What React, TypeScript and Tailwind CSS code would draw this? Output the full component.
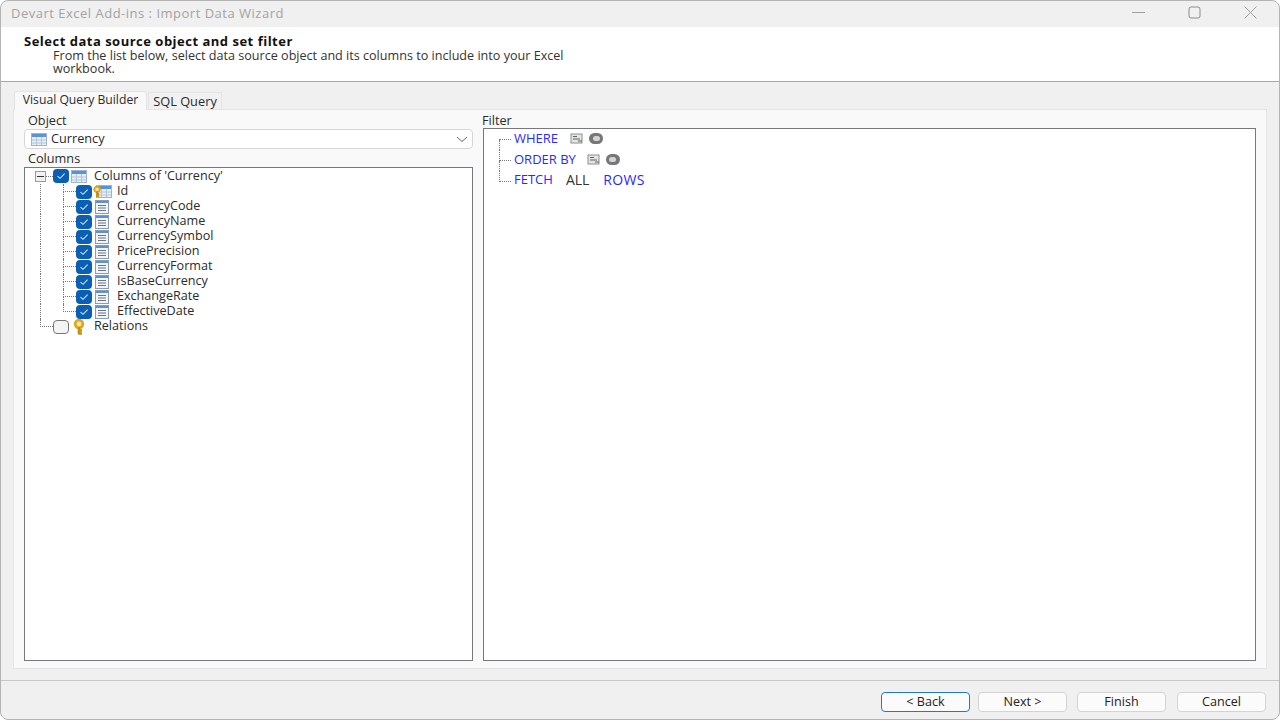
const columns = [
  "Id",
  "CurrencyCode",
  "CurrencyName",
  "CurrencySymbol",
  "PricePrecision",
  "CurrencyFormat",
  "IsBaseCurrency",
  "ExchangeRate",
  "EffectiveDate",
];

function Check({ on }: { on: boolean }) {
  if (!on) {
    return <div className="h-[14px] w-[16px] shrink-0 rounded-[4px] border border-[#777] bg-[#f4f4f4]" />;
  }
  return (
    <div className="flex h-[14px] w-[16px] shrink-0 items-center justify-center rounded-[4px] bg-[#0a5fb4]">
      <svg width="10" height="8" viewBox="0 0 10 8" fill="none" stroke="#cfe3f7" strokeWidth="1.1">
        <path d="M1.5 4.2 4 6.3 8.6 1.6" />
      </svg>
    </div>
  );
}

function TableIcon() {
  return (
    <svg width="16" height="13" viewBox="0 0 16 13" className="shrink-0">
      <rect x="0.5" y="0.5" width="15" height="12" fill="#e8eef6" stroke="#9fb4ce" />
      <rect x="1" y="1" width="14" height="3" fill="#5a93d3" />
      <path d="M1 7h14M1 10h14M5.5 4v8M10.5 4v8" stroke="#b4c6dc" strokeWidth="1" />
    </svg>
  );
}

function ColumnIcon() {
  return (
    <svg width="16" height="14" viewBox="0 0 16 14" className="shrink-0">
      <rect x="1.5" y="0.5" width="13" height="13" fill="#f1f4f8" stroke="#8b9db3" />
      <rect x="2" y="1" width="12" height="2" fill="#5a93d3" />
      <path d="M4 5.5h8M4 8h8M4 10.5h8" stroke="#6d7580" strokeWidth="1" />
    </svg>
  );
}

function KeyIcon({ w = 14, h = 16 }: { w?: number; h?: number }) {
  return (
    <svg width={w} height={h} viewBox="0 0 14 16" className="relative z-10 shrink-0">
      <circle cx="7" cy="5" r="3.8" fill="#fbe9a8" stroke="#e0a820" strokeWidth="2.8" />
      <path d="M7 8v7.5M7 11.5h3M7 14.5h3" stroke="#c98f12" strokeWidth="2.6" fill="none" />
    </svg>
  );
}

// dotted tree guides, each one cell of a row
function Pipe({ width }: { width: string }) {
  return <div className={`h-full shrink-0 border-l border-dotted border-[#777] ${width}`} />;
}

function Tee({ width, last, first }: { width: string; last?: boolean; first?: boolean }) {
  return (
    <div className={`h-full shrink-0 ${width}`}>
      <div className={`h-1/2 border-b border-dotted border-[#777] ${first ? "" : "border-l"}`} />
      {!last && <div className="h-1/2 border-l border-dotted border-[#777]" />}
    </div>
  );
}

function FilterIcon() {
  return (
    <svg width="14" height="11" viewBox="0 0 14 11" className="shrink-0">
      <rect x="1" y="1" width="11" height="9" fill="#e4e6e4" stroke="#8b8f8b" />
      <path d="M3 3.5h4M3 6h7M8 8h4" stroke="#5c645c" strokeWidth="1.2" />
    </svg>
  );
}

function GrayDot() {
  return (
    <div className="flex h-[11px] w-[14px] shrink-0 items-center justify-center rounded-full bg-[#77777a]">
      <div className="h-[5px] w-[7px] rounded-full bg-[#d4d4d6]" />
    </div>
  );
}

function WizardButton({ label, focused, className }: { label: string; focused?: boolean; className?: string }) {
  return (
    <button
      className={`h-[20px] w-[89px] rounded-[4px] border bg-[#fbfbfb] text-[12.6px] leading-none text-[#222] ${
        focused ? "border-[#1f78c8]" : "border-[#d4d4d4]"
      } ${className ?? ""}`}
    >
      {label}
    </button>
  );
}

export default function App() {
  return (
    <div className="flex h-[720px] w-[1280px] flex-col overflow-hidden rounded-[8px] border border-[#b4b4b4] bg-[#f0f0f0] font-['Open_Sans',sans-serif] text-[12.7px] text-[#2b2b2b]">
      <div className="flex h-[26px] shrink-0 items-center justify-between pl-[10px] pr-[22px]">
        <span className="text-[13px] tracking-[0.5px] text-[#a3a3a3]">Devart Excel Add-ins : Import Data Wizard</span>
        <div className="-mt-[3px] flex items-center gap-[43px]">
          <svg width="13" height="13" viewBox="0 0 13 13" stroke="#a0a0a0" fill="none"><path d="M0 6.5h13" /></svg>
          <svg width="13" height="13" viewBox="0 0 13 13" stroke="#8c8c8c" fill="none"><rect x="1" y="1" width="11" height="11" rx="2" /></svg>
          <svg width="13" height="13" viewBox="0 0 13 13" stroke="#a0a0a0" fill="none"><path d="M0.5 0.5 12.5 12.5M12.5 0.5 0.5 12.5" /></svg>
        </div>
      </div>

      <div className="h-[55px] shrink-0 border-b border-[#a8a8a8] bg-white pl-[23px] pt-[7px]">
        <div className="text-[13px] font-bold leading-[15px] tracking-[0.5px] text-[#111]">Select data source object and set filter</div>
        <p className="ml-[29px] w-[530px] text-[12.6px] leading-[13px] text-[#333]">
          From the list below, select data source object and its columns to include into your Excel workbook.
        </p>
      </div>

      <div className="flex min-h-0 flex-1 flex-col px-[12px] pt-[8px]">
        <div className="flex h-[19px] shrink-0 items-end pl-[1px]">
          <div className="-mb-px z-10 flex h-[19px] w-[133px] items-center justify-center rounded-t-[3px] border border-b-0 border-[#e4e4e4] bg-[#f9f9f9] pb-[2px] text-[12.2px]">
            Visual Query Builder
          </div>
          <div className="ml-px flex h-[17px] w-[74px] items-center justify-center border border-b-0 border-[#e4e4e4] bg-[#f1f1f1] pt-[2px] text-[12.8px]">
            SQL Query
          </div>
        </div>

        <div className="flex h-[560px] shrink-0 gap-[10px] border border-[#e4e4e4] bg-[#f9f9f9] pb-[7px] pl-[10px] pr-[10px] pt-[2px]">
          <div className="flex w-[449px] shrink-0 flex-col">
            <div className="h-[17px] pl-[4px] leading-[16px]">Object</div>
            <div className="flex h-[20px] shrink-0 items-center gap-[4px] rounded-[4px] border border-[#d6d6d6] bg-white pl-[6px] pr-[4px]">
              <TableIcon />
              <span className="flex-1">Currency</span>
              <svg width="12" height="7" viewBox="0 0 12 7" fill="none" stroke="#666"><path d="M1 1l5 4.5L11 1" /></svg>
            </div>
            <div className="h-[18px] pl-[4px] pt-[1px] leading-[17px]">Columns</div>
            <div className="min-h-0 flex-1 border border-[#77777f] bg-white pl-[10px] text-[12.6px]">
              <div className="flex h-[16px] items-center">
                <div className="flex h-[11px] w-[11px] shrink-0 items-center justify-center border border-[#9a9a9a] bg-[#f2f2f2]">
                  <div className="h-px w-[7px] bg-[#333]" />
                </div>
                <div className="w-[7px] border-b border-dotted border-[#777]" />
                <Check on />
                <div className="w-[2px]" />
                <TableIcon />
                <span className="ml-[7px] leading-none">Columns of 'Currency'</span>
              </div>
              {columns.map((name, i) => (
                <div key={name} className="flex h-[15px] items-center pl-[5px]">
                  <Pipe width="w-[23px]" />
                  <Tee width="w-[13px]" last={i === columns.length - 1} />
                  <Check on />
                  <div className="w-[2px]" />
                  {i === 0 ? (
                    <div className="-ml-[2px] flex items-center">
                      <KeyIcon w={10} h={13} />
                      <div className="-ml-[6px]"><TableIcon /></div>
                      <span className="ml-[5px] leading-none">{name}</span>
                    </div>
                  ) : (
                    <>
                      <ColumnIcon />
                      <span className="ml-[7px] leading-none">{name}</span>
                    </>
                  )}
                </div>
              ))}
              <div className="flex h-[15px] items-center pl-[5px]">
                <Tee width="w-[13px]" last />
                <Check on={false} />
                <div className="ml-[3px]"><KeyIcon /></div>
                <span className="ml-[8px] leading-none">Relations</span>
              </div>
            </div>
          </div>

          <div className="flex min-w-0 flex-1 flex-col">
            <div className="-ml-px h-[16px] leading-[16px]">Filter</div>
            <div className="min-h-0 flex-1 border border-[#77777f] bg-white pl-[15px] text-[13px] text-[#2a2aff]">
              <div className="flex h-[21px] items-center">
                <Tee width="w-[12px]" first />
                <div className="-translate-y-[1px] flex items-center">
                  <span className="ml-[3px]">WHERE</span>
                  <div className="ml-[12px]"><FilterIcon /></div>
                  <div className="ml-[5px]"><GrayDot /></div>
                </div>
              </div>
              <div className="flex h-[21px] items-center">
                <Tee width="w-[12px]" />
                <div className="-translate-y-[1px] flex items-center">
                  <span className="ml-[3px]">ORDER BY</span>
                  <div className="ml-[11px]"><FilterIcon /></div>
                  <div className="ml-[5px]"><GrayDot /></div>
                </div>
              </div>
              <div className="flex h-[21px] items-center">
                <Tee width="w-[12px]" last />
                <div className="-translate-y-[2px] flex items-center">
                  <span className="ml-[3px]">FETCH</span>
                  <span className="ml-[13px] text-[14px] text-[#333]">ALL</span>
                  <span className="ml-[14px] text-[14px] tracking-[0.3px]">ROWS</span>
                </div>
              </div>
            </div>
          </div>
        </div>
      </div>

      <div className="flex h-[39px] shrink-0 items-start justify-end border-t border-[#c8c8c8] pr-[13px] pt-[11px]">
        <WizardButton label="< Back" focused />
        <WizardButton label="Next >" className="ml-[8px]" />
        <WizardButton label="Finish" className="ml-[10px]" />
        <WizardButton label="Cancel" className="ml-[11px]" />
      </div>
    </div>
  );
}
